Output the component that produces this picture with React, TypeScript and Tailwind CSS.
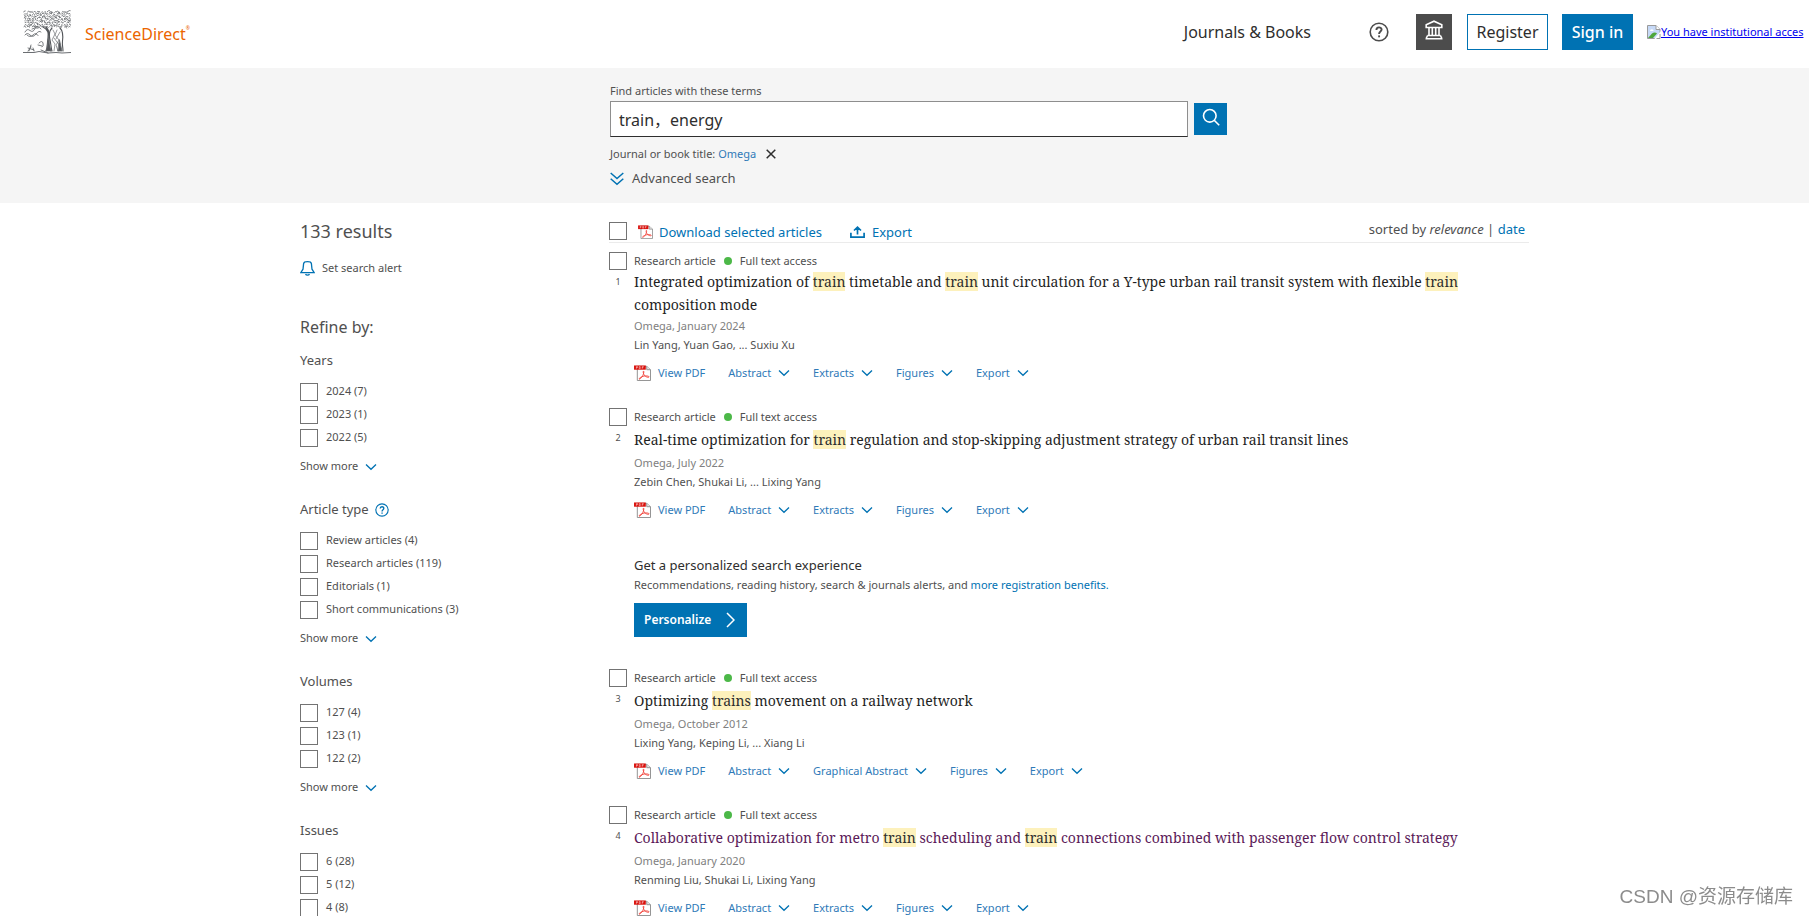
import React, { useState } from 'react';

interface Article {
    id: number;
    title: string;
    source: string;
    authors: string;
    links: string[];
    visited?: boolean;
}

interface FacetGroup {
    name: string;
    help?: boolean;
    options: string[];
    showMore: boolean;
}

const facets: FacetGroup[] = [
    { name: 'Years', options: ['2024 (7)', '2023 (1)', '2022 (5)'], showMore: true },
    {
        name: 'Article type',
        help: true,
        options: ['Review articles (4)', 'Research articles (119)', 'Editorials (1)', 'Short communications (3)'],
        showMore: true,
    },
    { name: 'Volumes', options: ['127 (4)', '123 (1)', '122 (2)'], showMore: true },
    { name: 'Issues', options: ['6 (28)', '5 (12)', '4 (8)'], showMore: false },
];

const articles: Article[] = [
    {
        id: 1,
        title: 'Integrated optimization of train timetable and train unit circulation for a Y-type urban rail transit system with flexible train composition mode',
        source: 'Omega, January 2024',
        authors: 'Lin Yang, Yuan Gao, ... Suxiu Xu',
        links: ['Abstract', 'Extracts', 'Figures', 'Export'],
    },
    {
        id: 2,
        title: 'Real-time optimization for train regulation and stop-skipping adjustment strategy of urban rail transit lines',
        source: 'Omega, July 2022',
        authors: 'Zebin Chen, Shukai Li, ... Lixing Yang',
        links: ['Abstract', 'Extracts', 'Figures', 'Export'],
    },
    {
        id: 3,
        title: 'Optimizing trains movement on a railway network',
        source: 'Omega, October 2012',
        authors: 'Lixing Yang, Keping Li, ... Xiang Li',
        links: ['Abstract', 'Graphical Abstract', 'Figures', 'Export'],
    },
    {
        id: 4,
        title: 'Collaborative optimization for metro train scheduling and train connections combined with passenger flow control strategy',
        source: 'Omega, January 2020',
        authors: 'Renming Liu, Shukai Li, Lixing Yang',
        links: ['Abstract', 'Extracts', 'Figures', 'Export'],
        visited: true,
    },
];

// Curls of the engraved canopy, spread over a jittered grid
const canopyCurls = (() => {
    let seed = 11;
    const rand = () => {
        seed = (seed * 16807) % 2147483647;
        return seed / 2147483647;
    };
    const curls: string[] = [];
    for (let row = 0; row < 8; row++) {
        for (let col = 0; col < 19; col++) {
            const x = 0.8 + col * 2.45 + rand() * 1.4;
            const y = 1.4 + row * 2.1 + rand() * 1.2;
            const dx = 1 + rand() * 1.4;
            const dy = (rand() - 0.5) * 2.6;
            curls.push(`M${x.toFixed(1)} ${y.toFixed(1)}q${(dx / 2).toFixed(1)} -1.6 ${dx.toFixed(1)} ${dy.toFixed(1)}`);
        }
    }
    return curls.join('');
})();

function TreeLogo() {
    return (
        <svg className="h-11 w-12" viewBox="0 0 48 44" fill="none" stroke="#6b6e72" strokeLinecap="round" aria-hidden="true">
            <path d={canopyCurls} strokeWidth="0.9" />
            <path d="M2 22q2-4 5-1.500t5-2 6 .5M2 25q2-3 5 0t6-1 5-2M4 25q3 3 6 0t5 .5M9 19q3-2 6-1" strokeWidth="0.9" />
            <path d="M20 17c4 2 6 6 5 11s0 9-2 13M23 17c3 3 4 8 3 13s1 8 2 11" stroke="#53565a" strokeWidth="1.200" />
            <path d="M25.500 28c-1 5-1 9-2.500 13h5c-1.500-4-1.500-8-2.500-13z" fill="#53565a" strokeWidth="0.6" />
            <path d="M29 18c-3 3-3 8-2 12s1 8 2 11M37 18c3 3 3 9 2.500 13s.5 6 .5 10" stroke="#53565a" strokeWidth="1.100" />
            <path d="M30 20l2 4-3 6 3 4-1 7M34 20l-2 5 4 5-3 5 2 6M37 22l-4 7M31 28l6 8" strokeWidth="0.7" />
            <path d="M36.500 30l2.500 11h-4z" fill="#53565a" strokeWidth="0.8" />
            <path d="M16 33q3-3 4 0t-1 4M15 35l4 1M8 35l-2 6M10 38l1 3M5 38l6 2M5 41l3-4" strokeWidth="0.9" />
            <path d="M0 42.500h11l5-1 9 1.500 8-.5 6 .5 9-.5M18 40l7 3" strokeWidth="1" />
        </svg>
    );
}

function HelpIcon({ className }: { className: string }) {
    return (
        <svg className={className} viewBox="0 0 20 20" fill="none" stroke="currentColor" strokeWidth="1.6" aria-hidden="true">
            <circle cx="10" cy="10" r="8.8" />
            <path d="M7.4 8c0-3.400 5.200-3.400 5.200-.4 0 2-2.500 2-2.500 4.400" strokeWidth="1.900" />
            <path d="M10.100 13.400v1.900" strokeWidth="1.900" />
        </svg>
    );
}

function InstitutionIcon() {
    return (
        <svg className="h-5 w-5" viewBox="0 0 20 20" fill="none" stroke="currentColor" strokeWidth="1.6" aria-hidden="true">
            <path d="M2.200 7.500V4.800L10 1.200l7.800 3.600v2.700zM5 7.500V15M8.300 7.500V15M11.700 7.500V15M15 7.500V15" />
            <path d="M3.500 15.500h13M1.500 18.700h17M3.600 15.500l-1.500 3M16.400 15.500l1.500 3" />
        </svg>
    );
}

function BrokenImageIcon() {
    return (
        <svg className="h-4 w-[14px] shrink-0" viewBox="0 0 14 16" aria-hidden="true">
            <path d="M.5 1.500h8.500l4 4v9H.5z" fill="#c6d9f7" stroke="#9a9a9a" />
            <path d="M9 1.500v4h4" fill="#fff" stroke="#9a9a9a" />
            <path d="M3 7a1.800 1.800 0 0 1 3.600 0z" fill="#fff" />
            <path d="M1 14l4-4.500c2-1.500 4-1 5 0L6 14z" fill="#4ea63b" />
            <path d="M14 7L6.500 16H14z" fill="#fff" />
            <path d="M13 10v4.500H9.500" fill="none" stroke="#9a9a9a" />
        </svg>
    );
}

function PdfIcon({ className }: { className: string }) {
    return (
        <svg className={className} viewBox="0 0 18 17" fill="none" aria-hidden="true">
            <path d="M3.500 1.500h10l4 3.500v11.500h-14z" fill="#fff" stroke="#8e8e8e" />
            <path d="M13.500 1.500V5h4" fill="#e4e4e4" stroke="#8e8e8e" />
            <path d="M0 .5h12.500V5H0z" fill="#d9100b" />
            <path d="M2.500 4V1.700h1.200v1.100H2.500M5.500 1.700v2.200h1.100V1.700zM8.700 4V1.700h1.600M8.700 2.800h1.200" stroke="#fff" strokeWidth=".5" />
            <path d="M10 6.500c-.8.500.2 3.500 1.300 4.800 1.500 1.600 4.500 2.300 4.700 1.400.2-1.200-4.200-1.400-6.400-.7-2 .7-4.500 2-4.200 2.900.6.900 2.700-1.600 3.800-3.600 1-1.900 1.700-4.800.8-4.800z" stroke="#f0443c" strokeWidth="1" />
        </svg>
    );
}

function Chevron() {
    return (
        <svg className="h-2 w-3 text-[#0072b3]" viewBox="0 0 12 8" fill="none" stroke="currentColor" strokeWidth="1.300" aria-hidden="true">
            <path d="M1 1.500l5 4.800 5-4.800" />
        </svg>
    );
}

function Checkbox({ id, label }: { id: string; label?: string }) {
    return (
        <input
            id={id}
            type="checkbox"
            aria-label={label}
            className="size-[18px] shrink-0 appearance-none border border-[#737373] bg-white checked:bg-[#0072b3]"
        />
    );
}

function Highlighted({ text }: { text: string }) {
    return (
        <>
            {text.split(/(\btrains?\b)/).map((part, i) =>
                i % 2 === 1 ? (
                    <mark key={i} className="bg-[#fdf1bc] text-[#2e2e2e]">{part}</mark>
                ) : (
                    part
                )
            )}
        </>
    );
}

function Header() {
    return (
        <header className="flex h-[68px] items-center overflow-hidden bg-white pl-[23px] whitespace-nowrap">
            <a href="#" className="flex items-center gap-3.5 pb-1">
                <TreeLogo />
                <span className="flex pt-1 text-base leading-6 text-[#eb6500]">
                    ScienceDirect<span className="text-[5px] leading-3">®</span>
                </span>
            </a>
            <nav className="ml-auto flex shrink-0 items-center pb-1">
                <a href="#" className="text-base text-[#2e2e2e]">Journals &amp; Books</a>
                <button type="button" aria-label="Help" className="ml-[58px] text-[#4c4c4c]">
                    <HelpIcon className="size-5" />
                </button>
                <button type="button" aria-label="Institutional access" className="ml-[27px] flex size-9 items-center justify-center bg-[#4c4c4c] pb-1 text-white">
                    <InstitutionIcon />
                </button>
                <button type="button" className="ml-[15px] h-9 w-[81px] border border-[#0072b3] bg-white text-base text-[#2e2e2e]">Register</button>
                <button type="button" className="ml-3.5 h-9 w-[71px] bg-[#0072b3] text-base font-medium text-white">Sign in</button>
                <a href="#" className="ml-3.5 flex w-[162px] items-center text-[11px] text-[#0000ee] underline">
                    <BrokenImageIcon />
                    You have institutional acces
                </a>
            </nav>
        </header>
    );
}

function SearchBar() {
    const [terms, setTerms] = useState('train，energy');

    return (
        <section className="bg-[#f5f5f5]">
            <div className="mx-auto box-content max-w-[1229px] pl-5">
                <form className="ml-[310px] h-[135px] max-w-[617px] pt-[13px] text-[#505050]" onSubmit={(e) => e.preventDefault()}>
                    <label htmlFor="terms" className="block text-[11px] leading-5">Find articles with these terms</label>
                    <div className="flex items-center gap-1.5">
                        <input
                            id="terms"
                            type="text"
                            value={terms}
                            onChange={(e) => setTerms(e.target.value)}
                            className="h-9 min-w-0 flex-1 border border-[#8e8e8e] border-b-[#2e2e2e] bg-white px-2 text-base text-[#2e2e2e] outline-none"
                        />
                        <button type="submit" aria-label="Search" className="flex h-8 w-[33px] items-center justify-center bg-[#0072b3] pb-1 text-white">
                            <svg className="size-[18px]" viewBox="0 0 18 18" fill="none" stroke="currentColor" strokeWidth="1.6" aria-hidden="true">
                                <circle cx="7.800" cy="7.800" r="6.300" />
                                <path d="M12.200 12.200l5 5" />
                            </svg>
                        </button>
                    </div>
                    <div className="flex h-[34px] items-center text-[11px]">
                        Journal or book title:&nbsp;<a href="#" className="text-[#2f7ab8]">Omega</a>
                        <button type="button" aria-label="Remove Omega" className="ml-2.5 text-[#2e2e2e]">
                            <svg className="size-2.5" viewBox="0 0 10 10" stroke="currentColor" strokeWidth="1.500" aria-hidden="true">
                                <path d="M.7.700l8.600 8.600M9.300.700L.7 9.300" />
                            </svg>
                        </button>
                    </div>
                    <a href="#" className="flex h-4 items-center gap-2 text-[13px] text-[#505050]">
                        <svg className="size-3.5 text-[#0072b3]" viewBox="0 0 14 14" fill="none" stroke="currentColor" strokeWidth="1.500" aria-hidden="true">
                            <path d="M.7 1l6.300 5.500L13.300 1M.7 6.800l6.300 5.500 6.300-5.500" />
                        </svg>
                        Advanced search
                    </a>
                </form>
            </div>
        </section>
    );
}

function Sidebar() {
    return (
        <aside className="w-[309px] shrink-0 text-[11px] text-[#505050]">
            <h1 className="pt-4 text-lg leading-6">133 results</h1>
            <button type="button" className="mt-[13px] flex h-6 items-center gap-[7px]">
                <svg className="size-[15px] text-[#0072b3]" viewBox="0 0 15 15" fill="none" stroke="currentColor" strokeWidth="1.300" aria-hidden="true">
                    <path d="M3.600 2.600C3.800 1 5 .7 7.500.7s3.700.3 3.900 1.900l.6 5.600 2.200 3.500H.8L3 8.200zM5.500 13.200c.7 1.200 3.300 1.200 4 0" />
                </svg>
                Set search alert
            </button>
            <h2 className="mt-[35px] mb-px text-base leading-6">Refine by:</h2>
            {facets.map((group) => (
                <div key={group.name} role="group" aria-label={group.name} className="mb-[11px] pt-2.5">
                    <h3 className="mb-2 flex h-[22px] items-center gap-1.5 text-[13px]">
                        {group.name}
                        {group.help && <HelpIcon className="size-3.5 text-[#0072b3]" />}
                    </h3>
                    {group.options.map((option) => (
                        <label key={option} className="flex h-[23px] items-center gap-2">
                            <Checkbox id={`${group.name}-${option}`} />
                            {option}
                        </label>
                    ))}
                    {group.showMore && (
                        <button type="button" className="mt-1.5 flex h-[23px] items-center gap-[7px]">
                            Show more
                            <Chevron />
                        </button>
                    )}
                </div>
            ))}
        </aside>
    );
}

function ArticleItem({ article }: { article: Article }) {
    return (
        <li className="flex pb-6">
            <div className="w-[25px] shrink-0">
                <Checkbox id={`article-${article.id}`} label={`Select article ${article.id}`} />
                <div className="w-[18px] text-center text-[9px] leading-3 text-[#505050]">{article.id}</div>
            </div>
            <div className="min-w-0 text-[11px] text-[#505050]">
                <div className="flex h-[18px] items-center">
                    Research article
                    <span className="mx-2 size-2 rounded-full bg-[#4cb848]" />
                    Full text access
                </div>
                <h2 className="flex min-h-[27px] max-w-[860px] items-center font-['Noto_Serif','DejaVu_Serif',serif] text-sm leading-[23px]">
                    <a href="#" className={article.visited ? 'text-[#5b1a58]' : 'text-[#1f1f1f]'}>
                        <Highlighted text={article.title} />
                    </a>
                </h2>
                <div className="leading-5 text-[#808080]">{article.source}</div>
                <div className="leading-[18px]">{article.authors}</div>
                <div className="mt-2 flex h-[22px] items-center gap-[23px] whitespace-nowrap text-[#2f7ab8]">
                    <a href="#" className="flex items-center gap-[7px]">
                        <PdfIcon className="h-4 w-[17px]" />
                        View PDF
                    </a>
                    {article.links.map((link) => (
                        <button key={link} type="button" className="flex items-center gap-[7px]">
                            {link}
                            <Chevron />
                        </button>
                    ))}
                </div>
            </div>
        </li>
    );
}

function Personalize() {
    return (
        <li className="pb-8 pl-[25px] text-[#505050]">
            <h2 className="pt-2.5 text-[13px] leading-5 text-[#2e2e2e]">Get a personalized search experience</h2>
            <p className="text-[11px] leading-5">
                Recommendations, reading history, search &amp; journals alerts, and{' '}
                <a href="#" className="text-[#0072b3]">more registration benefits.</a>
            </p>
            <button type="button" className="mt-2 flex h-[34px] w-[113px] items-center justify-between bg-[#0072b3] pr-3 pl-2.5 text-xs font-semibold text-white">
                Personalize
                <svg className="h-4 w-[9px]" viewBox="0 0 9 16" fill="none" stroke="currentColor" strokeWidth="1.500" aria-hidden="true">
                    <path d="M1 1l7 7-7 7" />
                </svg>
            </button>
        </li>
    );
}

function Results() {
    return (
        <main className="min-w-0 flex-1">
            <div className="mt-2 flex h-8 items-end border-b border-[#ebebeb] pb-0.5 text-[13px] leading-4 text-[#0072b3]">
                <Checkbox id="select-all" label="Select all articles" />
                <button type="button" className="ml-[11px] flex items-center gap-1.5">
                    <PdfIcon className="h-3.5 w-[15px]" />
                    Download selected articles
                </button>
                <button type="button" className="ml-7 flex items-center gap-[7px]">
                    <svg className="h-3 w-[15px]" viewBox="0 0 15 12" fill="none" stroke="currentColor" strokeWidth="1.700" aria-hidden="true">
                        <path d="M7.500 8.500V1.300M4 4.500l3.500-3.300L11 4.500M.9 6.800v4.300h13.200V6.800" />
                    </svg>
                    Export
                </button>
                <div className="ml-auto pr-1 pb-[3px] text-[#505050]">
                    sorted by <em>relevance</em> | <a href="#" className="text-[#0072b3]">date</a>
                </div>
            </div>
            <ol className="pt-[9px]">
                {articles.slice(0, 2).map((article) => <ArticleItem key={article.id} article={article} />)}
                <Personalize />
                {articles.slice(2).map((article) => <ArticleItem key={article.id} article={article} />)}
            </ol>
        </main>
    );
}

function App() {
    return (
        <div className="h-screen overflow-hidden bg-white font-['Noto_Sans','Noto_Sans_CJK_SC',sans-serif]">
            <Header />
            <SearchBar />
            <div className="mx-auto box-content flex max-w-[1229px] pl-5">
                <Sidebar />
                <Results />
            </div>
            <div className="fixed right-4 bottom-1 font-['Liberation_Sans','Noto_Sans_CJK_SC',sans-serif] text-[19px] leading-[30px] text-[#8c8c8c]">CSDN @资源存储库</div>
        </div>
    );
}

export default App;
